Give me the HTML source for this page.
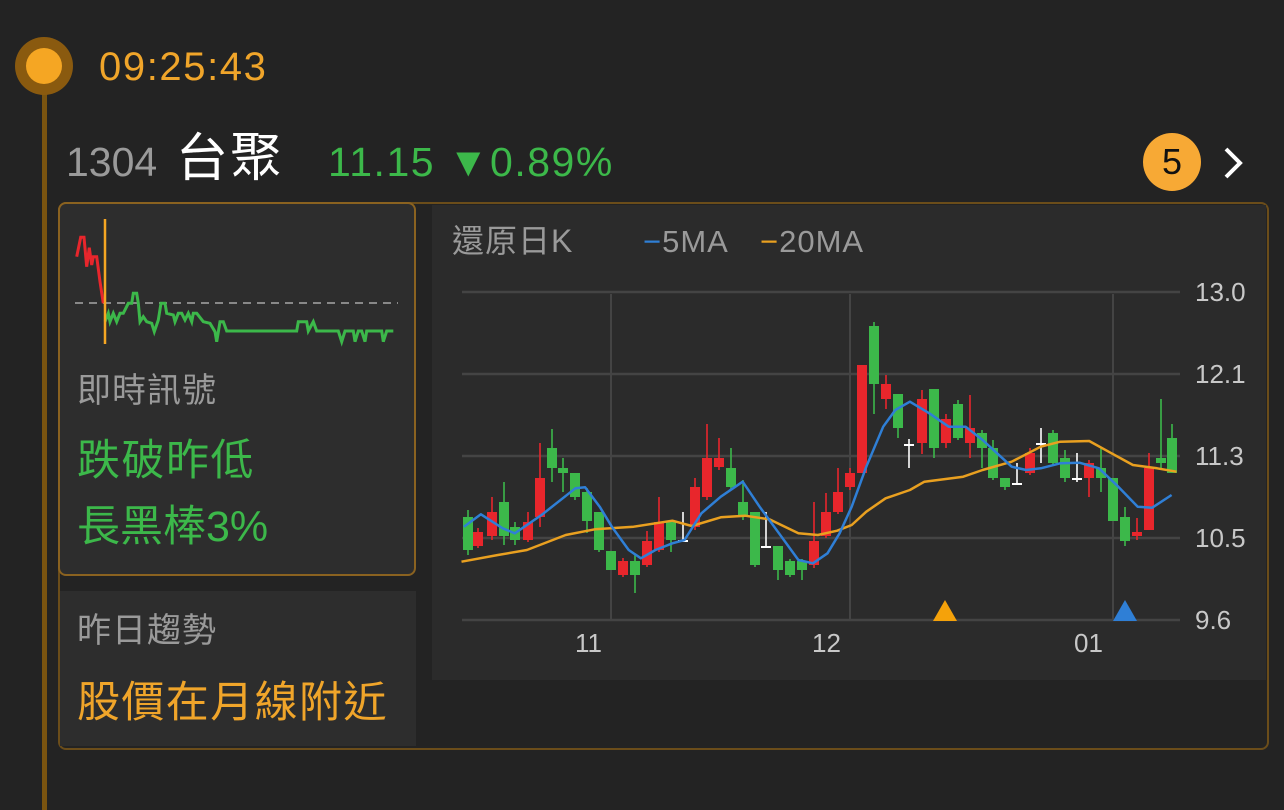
<!DOCTYPE html>
<html><head><meta charset="utf-8">
<style>
html,body{margin:0;padding:0;background:#232323;width:1284px;height:810px;overflow:hidden;font-family:"Liberation Sans","Noto Sans CJK TC",sans-serif;}
.a{position:absolute;white-space:nowrap;line-height:1;}
</style></head><body>
<div class="a" style="left:42px;top:90px;width:5px;height:720px;background:#7a5410"></div>
<div class="a" style="left:15px;top:37px;width:58px;height:58px;border-radius:50%;background:#8a5a0f"></div>
<div class="a" style="left:26px;top:48px;width:36px;height:36px;border-radius:50%;background:#f5a623"></div>
<div class="a" style="left:99px;top:47px;font-size:40px;letter-spacing:1.6px;color:#f0a52a">09:25:43</div>
<div class="a" style="left:66px;top:142px;font-size:41px;color:#9a9a9a;letter-spacing:0px">1304</div>
<div class="a" style="left:176px;top:133px;font-size:52px;color:#fff;letter-spacing:2px">台聚</div>
<div class="a" style="left:328px;top:142px;font-size:41px;color:#3cb84a;letter-spacing:1.5px">11.15 ▼0.89%</div>
<div class="a" style="left:1143px;top:133px;width:58px;height:58px;border-radius:50%;background:#f7a935"></div>
<div class="a" style="left:1143px;top:144px;width:58px;text-align:center;font-size:36px;color:#111">5</div>
<svg class="a" style="left:1220px;top:145px" width="30" height="36"><path d="M6 4 L20 18 L6 32" stroke="#fff" stroke-width="4" fill="none"/></svg>

<div class="a" style="left:58px;top:202px;width:1207px;height:544px;border:2px solid #6b4d1a;border-radius:8px"></div>
<div class="a" style="left:432px;top:205px;width:834px;height:475px;background:#2b2b2b"></div>
<div class="a" style="left:60px;top:591px;width:356px;height:155px;background:#2d2d2d"></div>
<div class="a" style="left:58px;top:202px;width:354px;height:370px;border:2px solid #8a6220;border-radius:8px;background:#2d2d2d"></div>

<svg class="a" style="left:0;top:0" width="1284" height="810" id="s"></svg>

<div class="a" style="left:77px;top:374px;font-size:34px;letter-spacing:1px;color:#9a9a9a">即時訊號</div>
<div class="a" style="left:77px;top:440px;font-size:43px;letter-spacing:1.5px;color:#3cb84a">跌破昨低</div>
<div class="a" style="left:77px;top:506px;font-size:43px;letter-spacing:0px;color:#3cb84a">長黑棒3%</div>
<div class="a" style="left:77px;top:614px;font-size:34px;letter-spacing:1px;color:#9a9a9a">昨日趨勢</div>
<div class="a" style="left:77px;top:682px;font-size:43px;letter-spacing:1.4px;color:#f0a52a">股價在月線附近</div>

<div class="a" style="left:452px;top:225px;font-size:32px;letter-spacing:1px;color:#9a9a9a">還原日K</div>
<div class="a" style="left:643px;top:226px;font-size:31px;letter-spacing:1px;color:#9a9a9a"><span style="color:#2f7fd6">−</span>5MA</div>
<div class="a" style="left:760px;top:226px;font-size:31px;letter-spacing:1px;color:#9a9a9a"><span style="color:#e9a020">−</span>20MA</div>
<div class="a" style="left:1195px;top:279px;font-size:26px;color:#c8c8c8">13.0</div>
<div class="a" style="left:1195px;top:361px;font-size:26px;color:#c8c8c8">12.1</div>
<div class="a" style="left:1195px;top:443px;font-size:26px;color:#c8c8c8">11.3</div>
<div class="a" style="left:1195px;top:525px;font-size:26px;color:#c8c8c8">10.5</div>
<div class="a" style="left:1195px;top:607px;font-size:26px;color:#c8c8c8">9.6</div>
<div class="a" style="left:575px;top:630px;font-size:26px;color:#c8c8c8">11</div>
<div class="a" style="left:812px;top:630px;font-size:26px;color:#c8c8c8">12</div>
<div class="a" style="left:1074px;top:630px;font-size:26px;color:#c8c8c8">01</div>

<script>
var s=document.getElementById('s'),h='';
[292,374,456,538,620].forEach(function(y){h+='<line x1="462" y1="'+y+'" x2="1180" y2="'+y+'" stroke="#444" stroke-width="2.5"/>';});
[611,850,1113].forEach(function(x){h+='<line x1="'+x+'" y1="294" x2="'+x+'" y2="620" stroke="#444" stroke-width="2"/>';});
var G='#3cb84a',R='#e8262c',W='#ffffff';
var c=[[468,510,555,517,550,G],[478,528,548,532,546,R],[492,497,540,512,536,R],[504,482,545,502,536,G],[515,522,545,527,540,G],[528,512,542,522,540,R],[540,443,527,478,517,R],[552,429,482,448,468,G],[563,458,492,468,473,G],[575,473,500,473,497,G],[587,488,533,492,521,G],[599,512,552,512,550,G],[611,551,570,551,570,G],[623,558,577,561,575,R],[635,555,593,561,575,G],[647,531,567,541,565,R],[659,497,552,522,550,R],[671,520,552,522,540,G],[683,512,542,540,542,W],[695,478,530,487,527,R],[707,424,500,458,497,R],[719,438,470,458,467,R],[731,448,490,468,487,G],[743,480,520,502,516,G],[755,512,567,512,565,G],[766,512,548,546,548,W],[778,546,580,546,570,G],[790,559,577,561,575,G],[802,559,580,561,570,G],[814,502,568,541,565,R],[826,493,538,512,536,R],[838,468,514,492,512,R],[850,468,490,473,487,R],[862,365,473,365,473,R],[874,322,414,326,384,G],[886,375,409,384,399,R],[898,394,438,394,428,G],[909,439,468,444,444,W],[922,390,454,399,443,R],[934,389,458,389,448,G],[946,414,448,419,443,R],[958,400,440,404,438,G],[970,395,458,428,443,R],[982,430,468,433,448,G],[993,440,480,448,478,G],[1005,478,490,478,487,G],[1017,463,483,483,483,W],[1030,448,475,453,473,R],[1041,428,463,443,443,W],[1053,430,465,433,463,G],[1065,450,482,458,478,G],[1077,453,482,478,478,W],[1089,460,497,463,478,R],[1101,448,492,468,478,G],[1113,478,521,478,521,G],[1125,507,546,517,541,G],[1137,518,540,532,536,R],[1149,453,530,468,530,R],[1161,399,468,458,463,G],[1172,424,473,438,473,G]];
c.forEach(function(k){var x=k[0];h+='<line x1="'+x+'" y1="'+k[1]+'" x2="'+x+'" y2="'+k[2]+'" stroke="'+k[5]+'" stroke-width="1.6"/>';var bh=Math.max(k[4]-k[3],2);h+='<rect x="'+(x-5)+'" y="'+k[3]+'" width="10" height="'+bh+'" fill="'+k[5]+'"/>';});
function pts(a,sx,sy,ox,oy){return a.map(function(p){return (ox+p[0]/sx).toFixed(1)+','+(oy+p[1]/sy).toFixed(1)}).join(' ');}
var ma5=[[70,740],[105,703],[150,745],[175,760],[230,705],[300,625],[320,622],[350,680],[375,740],[410,810],[435,835],[465,810],[500,790],[525,780],[560,700],[600,650],[645,605],[680,680],[720,760],[760,840],[790,850],[820,820],[845,760],[870,680],[900,560],[935,440],[960,390],[990,365],[1030,400],[1070,440],[1105,440],[1140,480],[1170,520],[1200,560],[1230,570],[1260,565],[1300,550],[1340,548],[1380,565],[1420,620],[1460,680],[1490,683],[1530,645]];
var ma20=[[65,845],[140,825],[200,810],[280,765],[340,748],[420,740],[500,722],[540,738],[600,712],[650,707],[700,718],[760,760],[800,765],[840,752],[870,735],[900,695],[940,655],[990,630],[1020,605],[1060,598],[1100,590],[1140,570],[1200,545],[1260,500],[1300,485],[1360,483],[1400,515],[1450,555],[1500,565],[1540,575]];
h+='<polyline points="'+pts(ma20,2.063,3,430,280)+'" fill="none" stroke="#e9a020" stroke-width="2.5" stroke-linejoin="round"/>';
h+='<polyline points="'+pts(ma5,2.063,3,430,280)+'" fill="none" stroke="#2f7fd6" stroke-width="2.5" stroke-linejoin="round"/>';
h+='<polygon points="933,621 945,600 957,621" fill="#f5a20a"/><polygon points="1113,621 1125,600 1137,621" fill="#2f7fd6"/>';
h+='<line x1="75" y1="303" x2="398" y2="303" stroke="#888" stroke-width="2" stroke-dasharray="8,6"/>';
var red=[[50,155],[62,97],[72,97],[80,185],[88,128],[95,180],[100,155],[110,155],[120,230],[130,295]];
var grn=[[135,350],[145,325],[150,350],[160,325],[170,350],[180,325],[190,325],[205,295],[215,295],[220,265],[230,265],[235,295],[240,350],[250,335],[260,350],[275,355],[283,380],[295,345],[303,295],[315,295],[320,325],[340,330],[345,350],[355,325],[365,325],[375,345],[385,325],[395,350],[400,325],[410,325],[430,350],[450,355],[465,380],[470,410],[480,350],[490,350],[500,378],[710,378],[715,350],[740,350],[745,378],[760,350],[770,378],[835,378],[845,410],[855,378],[880,378],[885,410],[895,378],[905,378],[915,410],[920,378],[965,378],[970,410],[980,378],[1000,378]];
h+='<polyline points="'+pts(red,3,3,60,205)+'" fill="none" stroke="#e8262c" stroke-width="3"/>';
h+='<polyline points="'+pts(grn,3,3,60,205)+'" fill="none" stroke="#3cb84a" stroke-width="3"/>';
h+='<line x1="105" y1="219" x2="105" y2="344" stroke="#f5a623" stroke-width="2.5"/>';
s.innerHTML=h;
</script>
</body></html>
